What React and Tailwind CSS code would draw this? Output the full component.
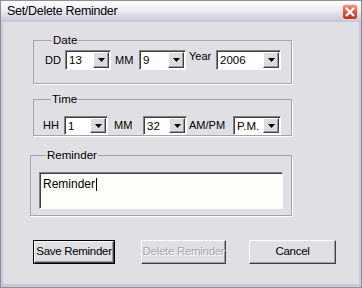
import React from "react";

const ComboBox = ({ value, width, height = "h-[20px]" }) => {
  return (
    <div
      className={`flex ${height} ${width} shrink-0 border border-t-[#808080] border-l-[#808080] border-b-white border-r-white bg-white shadow-[inset_1px_1px_0_#404040]`}
    >
      <div className="flex-1 pl-[3px] pt-[3px] text-[11.5px] leading-[13px] text-black">{value}</div>
      <div className="mt-[1px] mr-[1px] mb-[1px] flex w-[16px] items-center justify-center border border-t-white border-l-white border-b-[#404040] border-r-[#404040] bg-[#dcdbe0] shadow-[inset_-1px_-1px_0_#9a9aa2]">
        <svg width="7" height="4" viewBox="0 0 7 4">
          <path d="M0 0h7L3.5 4z" fill="#000" />
        </svg>
      </div>
    </div>
  );
};

const Btn = ({ children, isDefault, disabled }) => {
  return (
    <div className={`h-[24px] ${isDefault ? "border border-black" : ""}`}>
      <div
        className={`flex h-full items-center justify-center whitespace-nowrap border border-t-white border-l-white border-b-[#404040] border-r-[#404040] bg-[#e0dfe3] shadow-[inset_-1px_-1px_0_#9c9ca4] text-[11.5px] tracking-[-0.3px] ${
          disabled ? "text-[#a8a8b0] [text-shadow:1px_1px_0_#fff]" : "text-black"
        }`}
      >
        {children}
      </div>
    </div>
  );
};

const CloseIcon = () => (
  <svg width="16" height="16" viewBox="0 0 16 16">
    <defs>
      <linearGradient id="closeGrad" x1="0" y1="0" x2="0" y2="1">
        <stop offset="0" stopColor="#ee9a8c" />
        <stop offset="0.5" stopColor="#d65a49" />
        <stop offset="1" stopColor="#b8301f" />
      </linearGradient>
    </defs>
    <rect x="0.5" y="0.5" width="15" height="15" rx="3" fill="url(#closeGrad)" stroke="#f3dcd8" />
    <path d="M4.5 4.5l7 7M11.5 4.5l-7 7" stroke="#ffffff" strokeWidth="2.2" strokeLinecap="round" />
  </svg>
);

export default function App() {
  return (
    <div className="flex h-[288px] w-[362px] flex-col border border-[#8d8d9c] bg-[#c9c9d6] font-['Liberation_Sans',Arial,sans-serif] text-[11px] text-black">
      {/* title bar */}
      <div className="flex h-[21px] items-center justify-between bg-[#e4e4ec] bg-[image:linear-gradient(to_bottom,#ffffff,#ececf2_45%,#c4c5d6)] pl-[6px] pr-[3px]">
        <span className="text-[12.5px] tracking-[-0.3px]">Set/Delete Reminder</span>
        <CloseIcon />
      </div>

      {/* body */}
      <div className="mx-[2px] mb-[3px] flex flex-1 flex-col bg-[#e0dfe3] pl-[30px] pt-[12px]">
        <fieldset className="w-[259px] border border-[#a4a4ad] pb-[13px] pl-[11px] pt-[4px] shadow-[1px_1px_0_#fff]">
          <legend className="ml-[7px] px-[1px] text-[11.5px] leading-[12px]">Date</legend>
          <div className="flex items-center">
            <span className="w-[20px]">DD</span>
            <ComboBox value="13" width="w-[46px]" />
            <span className="ml-[4px] w-[24px]">MM</span>
            <ComboBox value="9" width="w-[47px]" />
            <span className="ml-[3px] w-[27px] -mt-[8px]">Year</span>
            <ComboBox value="2006" width="w-[65px]" />
          </div>
        </fieldset>

        <fieldset className="mt-[9px] w-[259px] border border-[#a4a4ad] pb-0 pl-[9px] pt-[11px] shadow-[1px_1px_0_#fff]">
          <legend className="ml-[8px] px-[1px] text-[11.5px] leading-[12px]">Time</legend>
          <div className="flex items-center">
            <span className="w-[21px]">HH</span>
            <ComboBox value="1" width="w-[44px]" height="h-[19px]" />
            <span className="ml-[6px] w-[29px]">MM</span>
            <ComboBox value="32" width="w-[44px]" height="h-[19px]" />
            <span className="ml-[2px] w-[44px]">AM/PM</span>
            <ComboBox value="P.M." width="w-[48px]" height="h-[19px]" />
          </div>
        </fieldset>

        <fieldset className="-ml-[3px] mt-[13px] w-[262px] border border-[#a4a4ad] pb-[6px] pl-[8px] pr-[8px] pt-[11px] shadow-[1px_1px_0_#fff]">
          <legend className="ml-[7px] px-[1px] text-[11.5px] leading-[12px]">Reminder</legend>
          <div className="h-[37px] border border-t-[#808080] border-l-[#808080] border-b-white border-r-white bg-[#fdfdfa] pl-[3px] pt-[3px] shadow-[inset_1px_1px_0_#404040]">
            <span className="inline-flex items-center text-[12px] leading-[14px]">
              Reminder
              <span className="ml-[1px] inline-block h-[13px] w-[1px] bg-black" />
            </span>
          </div>
        </fieldset>

        <div className="mt-[24px] flex items-start">
          <div className="w-[82px] shrink-0">
            <Btn isDefault>Save Reminder</Btn>
          </div>
          <div className="ml-[26px] w-[85px] shrink-0">
            <Btn disabled>Delete Reminder</Btn>
          </div>
          <div className="ml-[23px] w-[87px] shrink-0">
            <Btn>Cancel</Btn>
          </div>
        </div>
      </div>
    </div>
  );
}
